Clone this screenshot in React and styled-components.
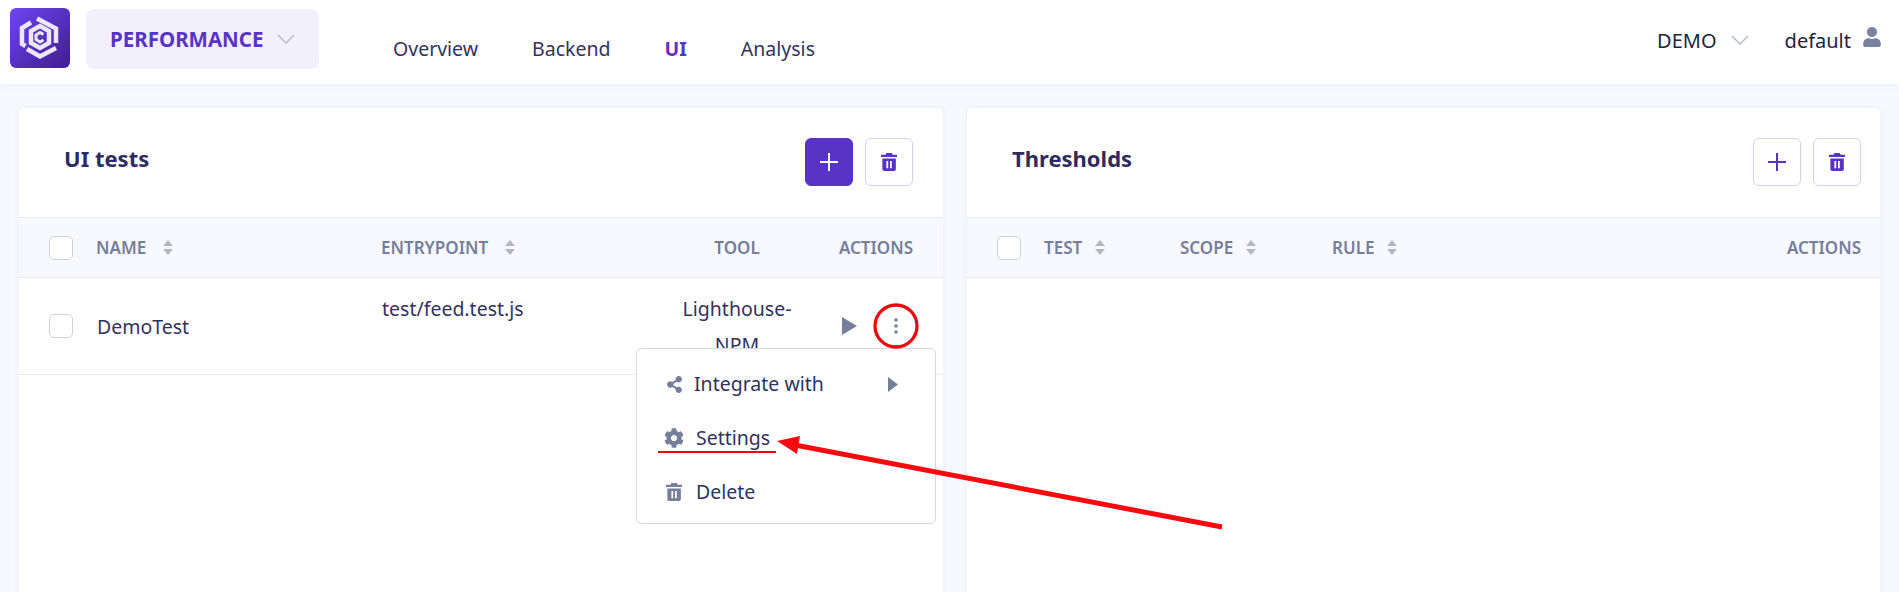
import React from "react";
import styled, { createGlobalStyle } from "styled-components";
import { FaCog, FaShareAlt, FaUser } from "react-icons/fa";

const GlobalStyle = createGlobalStyle`
  html, body {
    margin: 0;
    padding: 0;
    height: 100%;
    overflow: hidden;
    background: #f8f9fe;
    font-family: "Noto Sans", "Open Sans", sans-serif;
    color: #32325d;
  }
  * {
    box-sizing: border-box;
  }
`;

const Page = styled.div`
  position: relative;
  width: 1899px;
  height: 592px;
  overflow: hidden;
`;

const Header = styled.header`
  display: flex;
  align-items: center;
  height: 84px;
  padding: 0 17px 0 10px;
  background: #fff;
  box-shadow: 0 2px 8px rgba(80, 80, 160, 0.05);
`;

const LogoBox = styled.div`
  width: 60px;
  height: 60px;
  margin-top: -8px;
  border-radius: 6px;
  background: linear-gradient(135deg, #6f45f2 0%, #3f1d8f 100%);
  display: flex;
  align-items: center;
  justify-content: center;
`;

const ModeSelect = styled.div`
  display: flex;
  align-items: center;
  width: 233px;
  height: 60px;
  margin: -6px 0 0 16px;
  padding-left: 24px;
  border-radius: 8px;
  background: #f1f0fc;
  color: #5933c6;
  font-size: 20.5px;
  font-weight: 700;
`;

const Chevron = styled.svg`
  width: 18px;
  height: 10px;
  margin-left: ${(p) => p.$gap}px;
  fill: none;
  stroke: #b5b8c4;
  stroke-width: 1.3;
`;

const Nav = styled.nav`
  display: flex;
  gap: 54px;
  margin: 13px 0 0 74px;
  font-size: 19.5px;
`;

const NavLink = styled.span`
  color: ${(p) => (p.$active ? "#5933c6" : "#32325d")};
  font-weight: ${(p) => (p.$active ? 700 : 400)};
`;

const HeaderRight = styled.div`
  display: flex;
  align-items: center;
  margin: -4px 0 0 auto;
  color: #22243c;
  font-size: 20px;
`;

const UserName = styled.span`
  margin-left: 36px;
`;

const UserIcon = styled(FaUser)`
  width: 20px;
  height: 20px;
  margin: -6px 0 0 11px;
  color: #79829f;
`;

const Content = styled.main`
  display: flex;
  gap: 24px;
  padding: 24px 19px 0;
`;

const Card = styled.section`
  flex: 0 0 ${(p) => p.$width}px;
  height: 520px;
  border-radius: 6px;
  background: #fff;
  box-shadow: 0 0 6px rgba(80, 80, 160, 0.08);
`;

const CardHead = styled.div`
  display: flex;
  align-items: center;
  justify-content: space-between;
  height: 109px;
  padding: 0 ${(p) => p.$right}px 8px 45px;
`;

const CardTitle = styled.h2`
  margin: -1px 0 0;
  color: #2e2b5f;
  font-size: 22px;
  font-weight: 700;
`;

const Buttons = styled.div`
  display: flex;
  gap: 12px;
  margin-top: 6px;
`;

const IconButton = styled.button`
  display: flex;
  align-items: center;
  justify-content: center;
  width: 48px;
  height: 48px;
  padding: 0;
  border-radius: 6px;
  border: 1px solid ${(p) => (p.$primary ? "#5933c6" : "#d6cff2")};
  background: ${(p) => (p.$primary ? "#5933c6" : "#fff")};
  color: ${(p) => (p.$primary ? "#fff" : "#5933c6")};
`;

const PlusIcon = styled.svg`
  width: 18px;
  height: 18px;
  stroke: currentColor;
  stroke-width: 2;
`;

const BinIcon = styled.svg`
  width: ${(p) => p.$size * 0.9}px;
  height: ${(p) => p.$size}px;
  fill: currentColor;
`;

const TableHead = styled.div`
  display: grid;
  grid-template-columns: ${(p) => p.$columns};
  align-items: center;
  height: 61px;
  padding: 0 ${(p) => p.$right}px 0 30px;
  border-top: 1px solid #e9ebf3;
  border-bottom: 1px solid #e9ebf3;
  background: #f8f9fe;
`;

const TableRow = styled.div`
  position: relative;
  display: grid;
  grid-template-columns: ${(p) => p.$columns};
  height: 97px;
  padding: 0 30px;
  border-bottom: 1px solid #e9ebf3;
  font-size: 19.5px;
  line-height: 36px;
`;

const Check = styled.span`
  display: block;
  width: 24px;
  height: 24px;
  border: 1px solid #cfd2dc;
  border-radius: 5px;
  background: #fff;
  align-self: ${(p) => (p.$center ? "center" : "auto")};
`;

const HeadCell = styled.div`
  display: flex;
  align-items: center;
  justify-content: ${(p) => p.$justify || "flex-start"};
  color: #757e9b;
  font-size: 17px;
  font-weight: 600;
`;

const SortIcon = styled.svg`
  width: 10px;
  height: 15px;
  margin-left: ${(p) => p.$gap || 17}px;
  fill: #b3b7c2;
`;

const NameCell = styled.div`
  align-self: center;
  padding: 2px 0 0 1px;
`;

const TopCell = styled.div`
  padding: 13px 0 0 ${(p) => (p.$align ? 0 : 1)}px;
  text-align: ${(p) => p.$align || "left"};
`;

const ActionsCell = styled.div`
  display: flex;
  align-items: center;
  justify-content: flex-end;
  gap: 37px;
  padding: 0 15px 1px 0;
`;

const PlayIcon = styled.svg`
  width: 15px;
  height: 18px;
  fill: #757e9b;
`;

const DotsIcon = styled.svg`
  width: 4px;
  height: 16px;
  fill: #757e9b;
`;

const Menu = styled.div`
  position: absolute;
  top: 70px;
  left: 617px;
  width: 300px;
  height: 176px;
  padding: 8px 0;
  border: 1px solid #d6d8e0;
  border-radius: 6px;
  background: #fff;
`;

const MenuItem = styled.div`
  display: flex;
  align-items: center;
  height: 54px;
  padding: 0 29px 0 ${(p) => p.$left || 29}px;
  color: #32325d;
  font-size: 19.5px;
  line-height: 24px;
`;

const MenuIcon = styled.span`
  display: flex;
  width: ${(p) => p.$width}px;
  color: #757e9b;
  font-size: ${(p) => p.$size}px;
`;

const SubArrow = styled.svg`
  width: 10px;
  height: 15px;
  margin-left: auto;
  margin-right: 8px;
  fill: #757e9b;
`;

const Annotations = styled.svg`
  position: absolute;
  top: 0;
  left: 0;
  width: 1899px;
  height: 592px;
  pointer-events: none;
`;

const TESTS_COLUMNS = "47px 285px 289px 134px 1fr";
const THRESHOLDS_COLUMNS = "47px 136px 152px 1fr 1fr";

function Logo() {
  return (
    <svg width="44" height="44" viewBox="0 0 44 44" fill="none" stroke="#ece8fb">
      <path d="M13 6.5 L4 12 V28 L7.5 30" strokeWidth="4.5" />
      <path d="M19 2.5 L38 12.5 V27" strokeWidth="4.5" />
      <path d="M9 33 L22 40.5 L38 32" strokeWidth="4.5" />
      <path d="M22 10 L31 15 V27 L22 32 L13 27 V15 Z" strokeWidth="4.5" />
      <path d="M25.5 18.5 L22 16.5 L18 19 V23.5 L22 26 L25.5 24" strokeWidth="3" />
    </svg>
  );
}

function ChevronDown({ gap }) {
  return (
    <Chevron $gap={gap} viewBox="0 0 18 10">
      <polyline points="1,1 9,9 17,1" />
    </Chevron>
  );
}

function Sort({ gap }) {
  return (
    <SortIcon $gap={gap} viewBox="0 0 10 15">
      <polygon points="5,0 10,6 0,6" />
      <polygon points="5,15 10,9 0,9" />
    </SortIcon>
  );
}

function Plus() {
  return (
    <PlusIcon viewBox="0 0 18 18">
      <line x1="9" y1="0" x2="9" y2="18" />
      <line x1="0" y1="9" x2="18" y2="9" />
    </PlusIcon>
  );
}

function Bin({ size }) {
  return (
    <BinIcon $size={size} viewBox="0 0 18 20">
      <path fillRule="evenodd" d="M6 0 H12 L13 2 H18 V4.5 H0 V2 H5 Z M1.5 6 H16.5 V18 Q16.5 20 14.5 20 H3.5 Q1.5 20 1.5 18 Z M6 9 V17 H8 V9 Z M10 9 V17 H12 V9 Z" />
    </BinIcon>
  );
}

export default function App() {
  return (
    <Page>
      <GlobalStyle />
      <Header>
        <LogoBox>
          <Logo />
        </LogoBox>
        <ModeSelect>
          PERFORMANCE
          <ChevronDown gap={14} />
        </ModeSelect>
        <Nav>
          <NavLink>Overview</NavLink>
          <NavLink>Backend</NavLink>
          <NavLink $active>UI</NavLink>
          <NavLink>Analysis</NavLink>
        </Nav>
        <HeaderRight>
          DEMO
          <ChevronDown gap={14} />
          <UserName>default</UserName>
          <UserIcon />
        </HeaderRight>
      </Header>

      <Content>
        <Card $width={924}>
          <CardHead $right={30}>
            <CardTitle>UI tests</CardTitle>
            <Buttons>
              <IconButton $primary>
                <Plus />
              </IconButton>
              <IconButton>
                <Bin size={18} />
              </IconButton>
            </Buttons>
          </CardHead>
          <TableHead $columns={TESTS_COLUMNS} $right={30}>
            <Check />
            <HeadCell>
              NAME
              <Sort />
            </HeadCell>
            <HeadCell>
              ENTRYPOINT
              <Sort />
            </HeadCell>
            <HeadCell $justify="center">TOOL</HeadCell>
            <HeadCell $justify="flex-end">ACTIONS</HeadCell>
          </TableHead>
          <TableRow $columns={TESTS_COLUMNS}>
            <Check $center />
            <NameCell>DemoTest</NameCell>
            <TopCell>test/feed.test.js</TopCell>
            <TopCell $align="center">
              Lighthouse-
              <br />
              NPM
            </TopCell>
            <ActionsCell>
              <PlayIcon viewBox="0 0 15 18">
                <polygon points="0,0 15,9 0,18" />
              </PlayIcon>
              <DotsIcon viewBox="0 0 4 16">
                <circle cx="2" cy="2" r="1.8" />
                <circle cx="2" cy="8" r="1.8" />
                <circle cx="2" cy="14" r="1.8" />
              </DotsIcon>
            </ActionsCell>
            <Menu>
              <MenuItem>
                <MenuIcon $width={28} $size={17}>
                  <FaShareAlt />
                </MenuIcon>
                Integrate with
                <SubArrow viewBox="0 0 10 15">
                  <polygon points="0,0 10,7.5 0,15" />
                </SubArrow>
              </MenuItem>
              <MenuItem $left={27}>
                <MenuIcon $width={32} $size={20}>
                  <FaCog />
                </MenuIcon>
                Settings
              </MenuItem>
              <MenuItem>
                <MenuIcon $width={30}>
                  <Bin size={18} />
                </MenuIcon>
                Delete
              </MenuItem>
            </Menu>
          </TableRow>
        </Card>

        <Card $width={913}>
          <CardHead $right={19}>
            <CardTitle>Thresholds</CardTitle>
            <Buttons>
              <IconButton>
                <Plus />
              </IconButton>
              <IconButton>
                <Bin size={18} />
              </IconButton>
            </Buttons>
          </CardHead>
          <TableHead $columns={THRESHOLDS_COLUMNS} $right={19}>
            <Check />
            <HeadCell>
              TEST
              <Sort gap={13} />
            </HeadCell>
            <HeadCell>
              SCOPE
              <Sort gap={13} />
            </HeadCell>
            <HeadCell>
              RULE
              <Sort gap={13} />
            </HeadCell>
            <HeadCell $justify="flex-end">ACTIONS</HeadCell>
          </TableHead>
        </Card>
      </Content>

      <Annotations viewBox="0 0 1899 592">
        <circle cx="896" cy="326" r="21" fill="none" stroke="#ea0a0f" strokeWidth="3.3" />
        <line x1="658" y1="452" x2="776" y2="452" stroke="#ea0a0f" strokeWidth="2" />
        <line x1="1222" y1="527" x2="795" y2="445" stroke="#f40a0f" strokeWidth="5" />
        <polygon points="777,441 800,436 797,454" fill="#f40a0f" />
      </Annotations>
    </Page>
  );
}
